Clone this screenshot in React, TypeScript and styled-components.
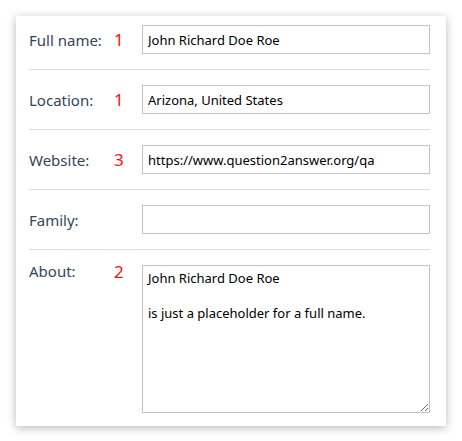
import styled, { createGlobalStyle } from 'styled-components';

const GlobalStyle = createGlobalStyle`
    html, body {
        margin: 0;
        padding: 0;
        background: #ffffff;
    }
    body {
        font-family: "Noto Sans", "Open Sans", sans-serif;
    }
`;

const Page = styled.div`
    padding: 16px;
`;

const Card = styled.form`
    width: 430px;
    box-sizing: border-box;
    background: #ffffff;
    padding: 9px 16px 13px 13px;
    box-shadow: 0 2px 9px rgba(0, 0, 0, 0.28);
`;

const Row = styled.div<{ $top?: boolean }>`
    display: flex;
    align-items: ${props => props.$top ? 'flex-start' : 'center'};
    padding: 15px 0;
    border-bottom: 1px solid #dddddd;
    &:first-child {
        padding-top: 0;
    }
    &:last-child {
        border-bottom: none;
        padding-bottom: 0;
    }
`;

const Label = styled.label<{ $top?: boolean }>`
    width: 85px;
    flex: none;
    font-size: 15px;
    line-height: 18px;
    color: #34445a;
    margin-top: ${props => props.$top ? '-3px' : '0'};
`;

const Count = styled.span<{ $top?: boolean }>`
    width: 28px;
    flex: none;
    font-size: 17px;
    line-height: 18px;
    color: #ff1010;
    margin-top: ${props => props.$top ? '-2px' : '0'};
`;

const Field = styled.input`
    flex: 1;
    min-width: 0;
    height: 29px;
    box-sizing: border-box;
    border: 1px solid #c3c3c3;
    padding: 0 5px;
    font-family: "Noto Sans", sans-serif;
    font-size: 13px;
    color: #000000;
    outline: none;
`;

const Area = styled.textarea`
    flex: 1;
    min-width: 0;
    height: 148px;
    box-sizing: border-box;
    border: 1px solid #c3c3c3;
    padding: 4px 5px;
    font-family: "Noto Sans", sans-serif;
    font-size: 13px;
    line-height: 17.5px;
    color: #000000;
    outline: none;
`;

const fields = [
    { label: 'Full name:', count: '1', value: 'John Richard Doe Roe' },
    { label: 'Location:', count: '1', value: 'Arizona, United States' },
    { label: 'Website:', count: '3', value: 'https://www.question2answer.org/qa' },
    { label: 'Family:', count: '', value: '' },
];

const App = () => {
    return (
        <Page>
            <GlobalStyle />
            <Card>
                {fields.map(f => (
                    <Row key={f.label}>
                        <Label>{f.label}</Label>
                        <Count>{f.count}</Count>
                        <Field defaultValue={f.value} />
                    </Row>
                ))}
                <Row $top>
                    <Label $top>About:</Label>
                    <Count $top>2</Count>
                    <Area defaultValue={'John Richard Doe Roe\n\nis just a placeholder for a full name.'} />
                </Row>
            </Card>
        </Page>
    )
}

export default App;
